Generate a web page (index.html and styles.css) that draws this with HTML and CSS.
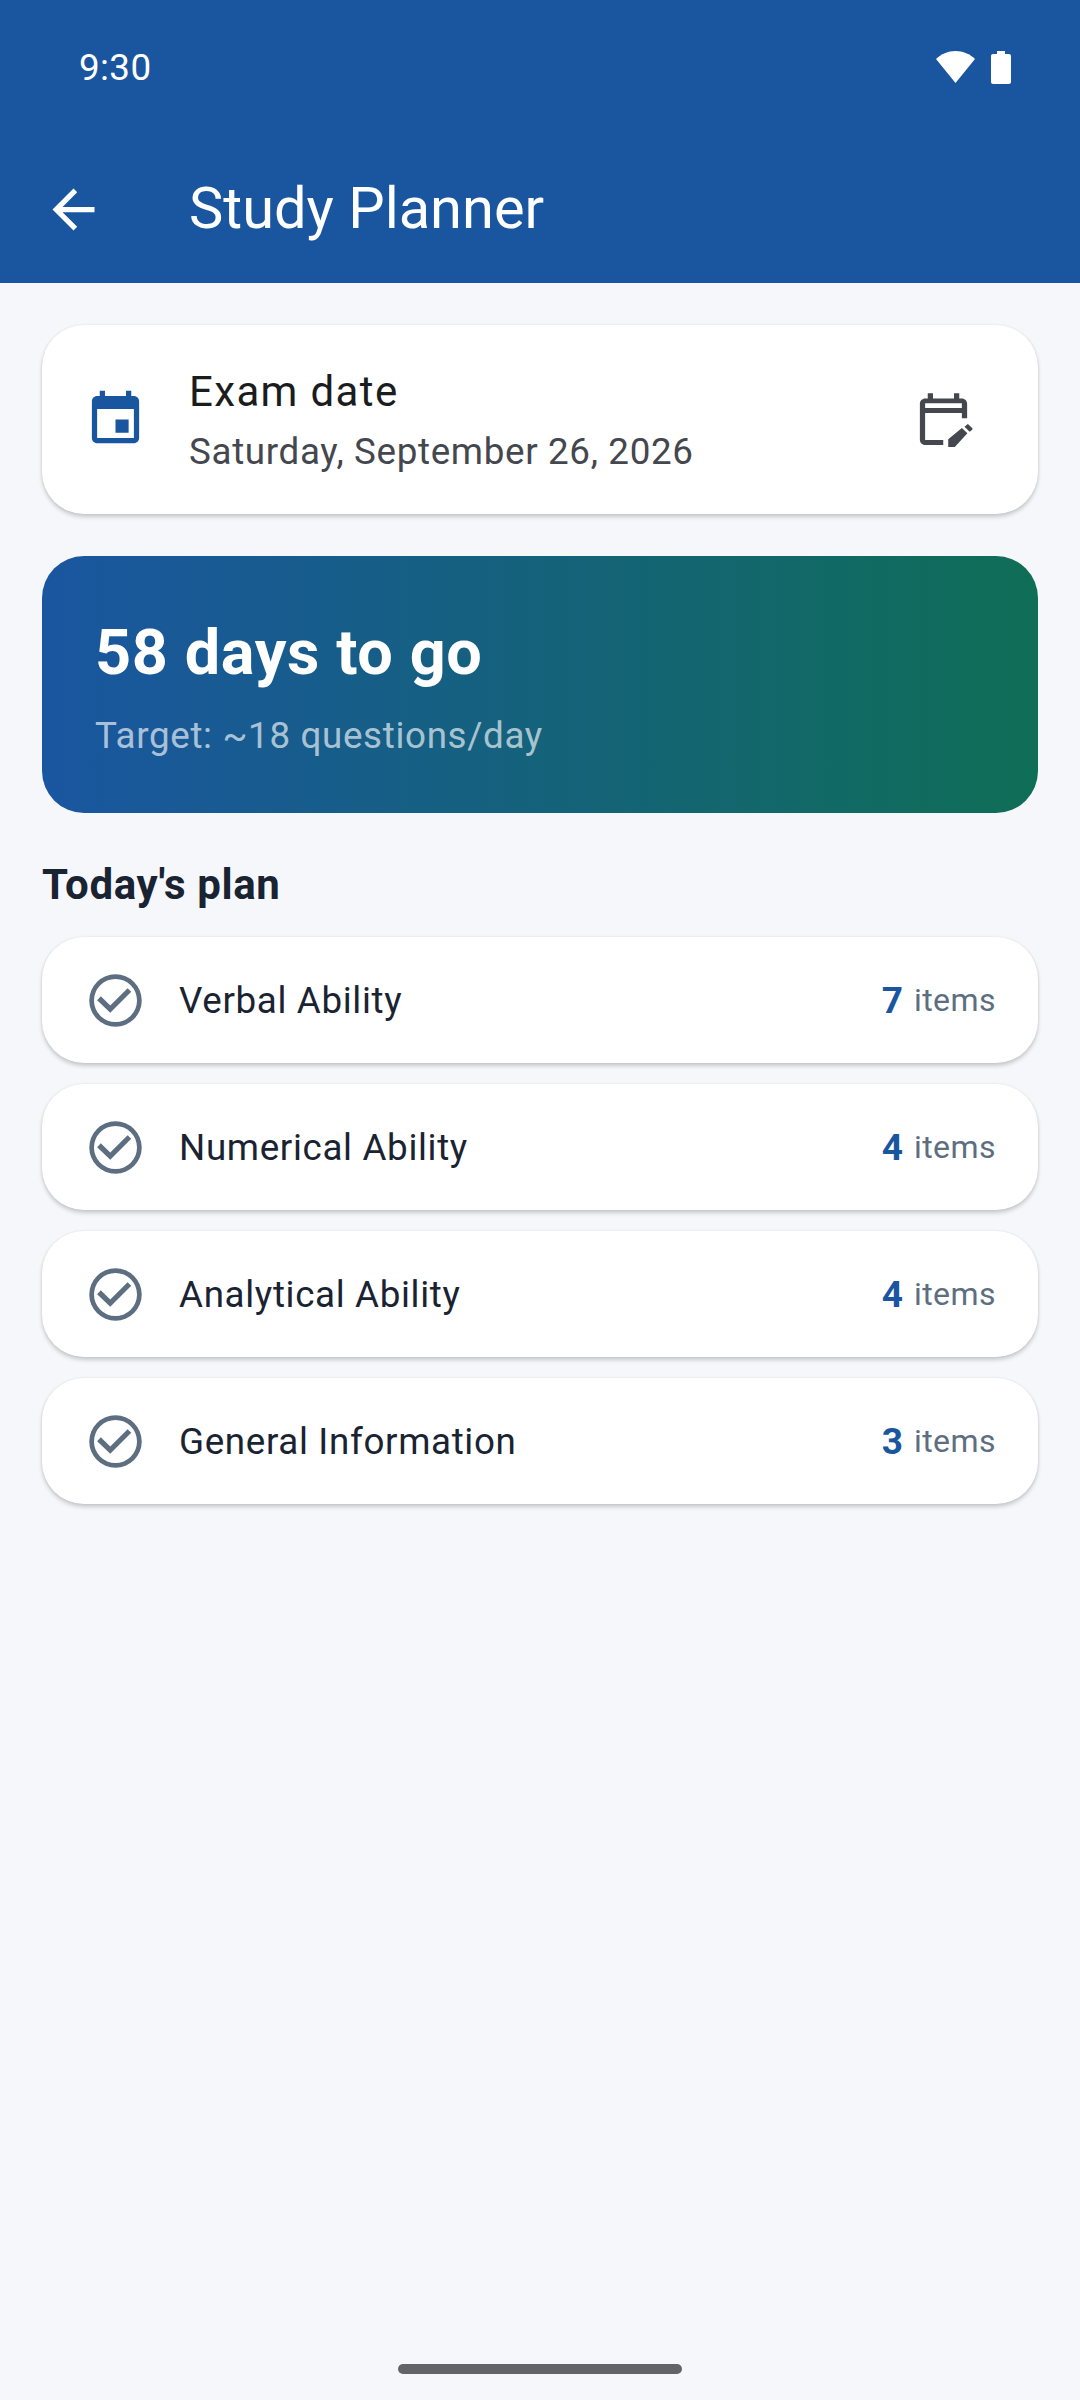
FILE: index.html
```html
<!DOCTYPE html>
<html lang="en">
<head>
  <meta charset="UTF-8" />
  <title>Study Planner</title>
  <link rel="stylesheet" href="styles.css">
</head>
<body>

  <header class="appbar">
    <div class="statusbar">
      <span class="clock">9:30</span>
      <div class="status-icons">
        <svg class="wifi" width="39" height="32" viewBox="0 0 39 32"><path d="M0 8C5 3 12 0 19.5 0S34 3 39 8L19.5 32z"/></svg>
        <svg class="battery" width="20" height="33" viewBox="0 0 20 33"><path d="M6 0h8v3h4c1.1 0 2 .9 2 2v26c0 1.100-.9 2-2 2H2c-1.100 0-2-.9-2-2V5c0-1.100.9-2 2-2h4z"/></svg>
      </div>
    </div>
    <div class="toolbar">
      <svg class="icon" viewBox="0 0 24 24"><path d="M20 11H7.830l5.590-5.590L12 4l-8 8 8 8 1.410-1.410L7.830 13H20v-2z"/></svg>
      <h1>Study Planner</h1>
    </div>
  </header>

  <main class="content">
    <section class="card exam">
      <svg class="icon exam-icon" viewBox="0 0 24 24"><path d="M17 12h-5v5h5v-5zM16 1v2H8V1H6v2H5c-1.110 0-1.990.9-1.990 2L3 19c0 1.100.89 2 2 2h14c1.100 0 2-.9 2-2V5c0-1.100-.9-2-2-2h-1V1h-2zm3 18H5V8h14v11z"/></svg>
      <div class="exam-text">
        <div class="exam-label">Exam date</div>
        <div class="exam-date">Saturday, September 26, 2026</div>
      </div>
      <svg class="icon edit-icon" viewBox="0 0 24 24"><path fill-rule="evenodd" d="M5 21.700c-1.100 0-2-.9-2-2V6c0-1.100.9-2 2-2h1V2h2v2h8V2h2v2h1c1.100 0 2 .9 2 2v5.500h-2V9.500H5v10.300h6.900v1.900H5zM5 7.600h14V5.800H5v1.800z"/><path d="M13.800 22.500v-3l5.200-4.300 2.100 2-4.800 5.300h-2.500zM20 14.800l.9-.8c.2-.2.5-.2.7 0l1.300 1.200c.2.2.2.5 0 .7l-.9.8-2-1.900z"/></svg>
    </section>

    <section class="countdown">
      <div class="countdown-title">58 days to go</div>
      <div class="countdown-target">Target: ~18 questions/day</div>
    </section>

    <h2 class="section-title">Today's plan</h2>

    <div class="plan-list">
      <div class="card plan-row">
        <svg class="icon check" viewBox="0 0 24 24"><path d="M12 2a10 10 0 1 0 0 20 10 10 0 0 0 0-20zm0 18.200a8.200 8.200 0 1 1 0-16.400 8.200 8.200 0 0 1 0 16.400zM16.600 7.300L18 8.700l-8 8-5-4.800 1.400-1.500 3.600 3.500z"/></svg>
        <span class="plan-name">Verbal Ability</span>
        <span class="plan-count">7</span>
        <span class="plan-unit">items</span>
      </div>
      <div class="card plan-row">
        <svg class="icon check" viewBox="0 0 24 24"><path d="M12 2a10 10 0 1 0 0 20 10 10 0 0 0 0-20zm0 18.200a8.200 8.200 0 1 1 0-16.400 8.200 8.200 0 0 1 0 16.400zM16.600 7.300L18 8.700l-8 8-5-4.800 1.400-1.500 3.600 3.500z"/></svg>
        <span class="plan-name">Numerical Ability</span>
        <span class="plan-count">4</span>
        <span class="plan-unit">items</span>
      </div>
      <div class="card plan-row">
        <svg class="icon check" viewBox="0 0 24 24"><path d="M12 2a10 10 0 1 0 0 20 10 10 0 0 0 0-20zm0 18.200a8.200 8.200 0 1 1 0-16.400 8.200 8.200 0 0 1 0 16.400zM16.600 7.300L18 8.700l-8 8-5-4.800 1.400-1.500 3.600 3.500z"/></svg>
        <span class="plan-name">Analytical Ability</span>
        <span class="plan-count">4</span>
        <span class="plan-unit">items</span>
      </div>
      <div class="card plan-row">
        <svg class="icon check" viewBox="0 0 24 24"><path d="M12 2a10 10 0 1 0 0 20 10 10 0 0 0 0-20zm0 18.200a8.200 8.200 0 1 1 0-16.400 8.200 8.200 0 0 1 0 16.400zM16.600 7.300L18 8.700l-8 8-5-4.800 1.400-1.500 3.600 3.500z"/></svg>
        <span class="plan-name">General Information</span>
        <span class="plan-count">3</span>
        <span class="plan-unit">items</span>
      </div>
    </div>
  </main>

  <div class="home-bar"></div>

</body>
</html>
```

FILE: styles.css
```css
html, body {
  margin: 0;
  padding: 0;
}

body {
  height: 2400px;
  overflow: hidden;
  display: flex;
  flex-direction: column;
  background: #f5f7fb;
  font-family: Roboto, sans-serif;
  color: #1a2332;
}

h1, h2 {
  margin: 0;
  font-weight: normal;
}

.icon {
  width: 63px;
  height: 63px;
  flex: none;
  fill: currentColor;
}

/* App bar */
.appbar {
  height: 283px;
  flex: none;
  background: #1a56a0;
  color: #fff;
}

.statusbar {
  height: 136px;
  box-sizing: border-box;
  padding: 0 69px 2px 79px;
  display: flex;
  justify-content: space-between;
  align-items: center;
}

.clock {
  font-size: 36.75px;
  letter-spacing: 0.4px;
}

.status-icons {
  display: flex;
  align-items: flex-start;
  gap: 16px;
  fill: #fff;
}

.toolbar {
  height: 147px;
  padding-left: 42px;
  padding-bottom: 3px;
  box-sizing: border-box;
  display: flex;
  align-items: center;
  gap: 84px;
}

.toolbar .icon {
  margin-top: 3px;
}

.toolbar h1 {
  font-size: 57.75px;
}

/* Cards */
.content {
  padding: 42px 42px 0;
}

.card {
  background: #fff;
  border-radius: 42px;
  box-shadow: 0 3px 4px rgba(0, 0, 0, 0.18), 0 0 3px rgba(0, 0, 0, 0.08);
}

.exam {
  height: 189px;
  box-sizing: border-box;
  padding: 0 63px 0 42px;
  display: flex;
  align-items: center;
}

.exam-icon {
  color: #1a56a0;
}

.exam-text {
  flex: 1;
  margin-left: 42px;
}

.exam-label {
  font-size: 42px;
  letter-spacing: 1.35px;
  line-height: 58px;
  color: #1a1c1e;
}

.exam-date {
  font-size: 36.75px;
  letter-spacing: 0.66px;
  line-height: 50px;
  margin-top: 6px;
  color: #44474e;
}

.edit-icon {
  color: #44474e;
}

/* Countdown */
.countdown {
  height: 257px;
  box-sizing: border-box;
  margin-top: 42px;
  padding: 60px 53px 0;
  border-radius: 42px;
  background: linear-gradient(90deg, #1a56a0, #0f6e56);
  color: #fff;
}

.countdown-title {
  font-size: 63px;
  font-weight: 700;
  letter-spacing: 0.6px;
  line-height: 74px;
}

.countdown-target {
  margin-top: 21px;
  font-size: 36.75px;
  letter-spacing: 0.66px;
  line-height: 50px;
  color: rgba(255, 255, 255, 0.65);
}

/* Plan */
.section-title {
  margin-top: 47px;
  font-size: 42px;
  font-weight: 700;
  letter-spacing: 0.6px;
  line-height: 50px;
}

.plan-list {
  margin-top: 27px;
  display: flex;
  flex-direction: column;
  gap: 21px;
}

.plan-row {
  height: 126px;
  box-sizing: border-box;
  padding: 0 42px;
  display: flex;
  align-items: center;
}

.check {
  color: #5c6e80;
}

.plan-name {
  flex: 1;
  margin-left: 32px;
  font-size: 36.75px;
  letter-spacing: 0.66px;
}

.plan-count {
  font-size: 37px;
  font-weight: 700;
  color: #1a56a0;
}

.plan-unit {
  margin-left: 11px;
  font-size: 32px;
  letter-spacing: 0.45px;
  color: #5c6e80;
}

/* Gesture bar */
.home-bar {
  width: 284px;
  height: 10px;
  flex: none;
  margin: auto auto 26px;
  border-radius: 5px;
  background: #636468;
}
```
